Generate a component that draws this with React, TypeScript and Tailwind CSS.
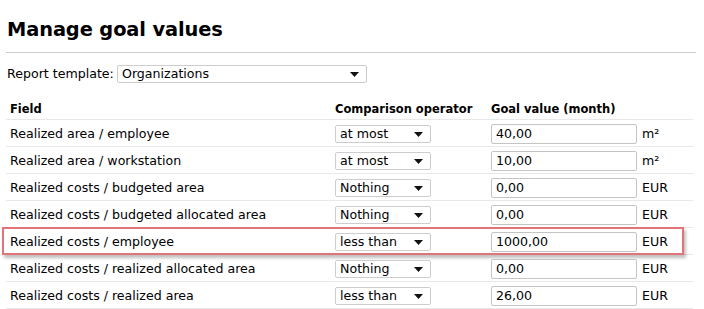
import React from 'react';

const rows = [
    { field: 'Realized area / employee', op: 'at most', value: '40,00', unit: 'm²' },
    { field: 'Realized area / workstation', op: 'at most', value: '10,00', unit: 'm²' },
    { field: 'Realized costs / budgeted area', op: 'Nothing', value: '0,00', unit: 'EUR' },
    { field: 'Realized costs / budgeted allocated area', op: 'Nothing', value: '0,00', unit: 'EUR' },
    { field: 'Realized costs / employee', op: 'less than', value: '1000,00', unit: 'EUR', marked: true },
    { field: 'Realized costs / realized allocated area', op: 'Nothing', value: '0,00', unit: 'EUR' },
    { field: 'Realized costs / realized area', op: 'less than', value: '26,00', unit: 'EUR' },
];

function Arrow() {
    return (
        <svg width="9" height="5" viewBox="0 0 9 5" className="shrink-0">
            <path d="M0 0 H9 L4.5 5 Z" fill="#111" />
        </svg>
    );
}

function FakeSelect({ value, width }: { value: string; width: string }) {
    return (
        <div className={`${width} h-[18px] flex items-center justify-between bg-white border border-[#cdcdcd] rounded-[2px] pl-[4px] pr-[7px]`}>
            <span className="leading-none">{value}</span>
            <Arrow />
        </div>
    );
}

export default function App() {
    return (
        <div className="w-[704px] h-[309px] bg-white text-black pl-[6px] pr-[8px] overflow-hidden font-['DejaVu_Sans',sans-serif] text-[12.6px]">
            <h1 className="pt-[16px] pl-[1px] text-[19.4px] font-bold leading-[28px] tracking-[-0.1px]">Manage goal values</h1>
            <div className="mt-[8px] h-px bg-[#cccccc]"></div>
            <div className="mt-[12px] flex items-center h-[18px]">
                <span className="pl-[1px] w-[111px]">Report template:</span>
                <FakeSelect value="Organizations" width="w-[250px]" />
            </div>
            <div className="mt-[17px] mr-[3px] flex items-center h-[20px] text-[11.5px] font-bold border-b border-[#e8e8e8]">
                <div className="w-[329px] pl-[4px]">Field</div>
                <div className="w-[156px]">Comparison operator</div>
                <div>Goal value (month)</div>
            </div>
            {rows.map((r) => (
                <div key={r.field} className="relative mr-[3px] flex items-center h-[27px] pt-[2px] border-b border-[#e8e8e8]">
                    <div className="w-[329px] pl-[4px]">{r.field}</div>
                    <div className="w-[156px]">
                        <FakeSelect value={r.op} width="w-[96px]" />
                    </div>
                    <div className="w-[146px] h-[20px] flex items-center bg-white border border-[#c4c4c4] rounded-[2px] pl-[4px]">
                        {r.value}
                    </div>
                    <div className="pl-[5px]">{r.unit}</div>
                    {r.marked && (
                        <div className="absolute left-[-4px] right-[9px] top-[-1px] bottom-[-1px] border-2 border-[#e27479] shadow-[2px_3px_3px_rgba(0,0,0,0.25)]"></div>
                    )}
                </div>
            ))}
        </div>
    );
}
